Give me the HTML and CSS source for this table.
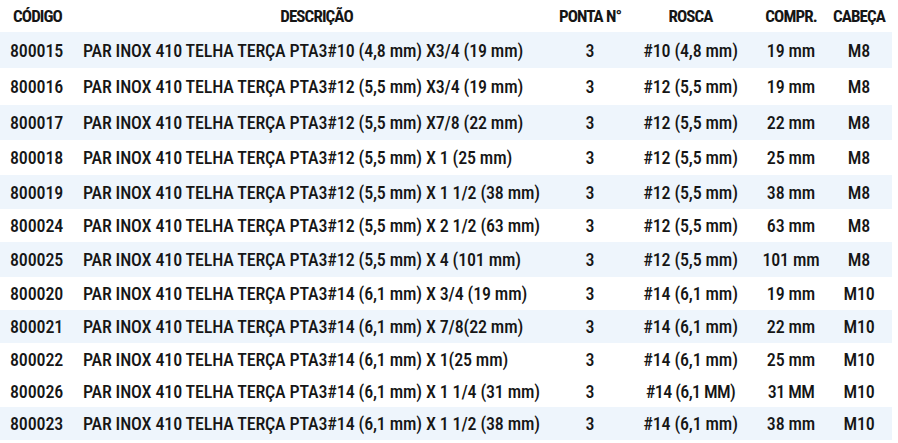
FILE: index.html
```html
<!DOCTYPE html>
<html lang="pt">
<head>
<meta charset="utf-8">
<link rel="stylesheet" href="styles.css">
</head>
<body>
<div class="table">
  <div class="row head">
    <div class="c code">CÓDIGO</div>
    <div class="c desc">DESCRIÇÃO</div>
    <div class="c mid">PONTA N°</div>
    <div class="c mid">ROSCA</div>
    <div class="c mid">COMPR.</div>
    <div class="c mid">CABEÇA</div>
  </div>
  <div class="row band">
    <div class="c code">800015</div>
    <div class="c desc">PAR INOX 410 TELHA TERÇA PTA3#10 (4,8 mm) X3/4 (19 mm)</div>
    <div class="c mid">3</div>
    <div class="c mid">#10 (4,8 mm)</div>
    <div class="c mid">19 mm</div>
    <div class="c mid">M8</div>
  </div>
  <div class="row">
    <div class="c code">800016</div>
    <div class="c desc">PAR INOX 410 TELHA TERÇA PTA3#12 (5,5 mm) X3/4 (19 mm)</div>
    <div class="c mid">3</div>
    <div class="c mid">#12 (5,5 mm)</div>
    <div class="c mid">19 mm</div>
    <div class="c mid">M8</div>
  </div>
  <div class="row band">
    <div class="c code">800017</div>
    <div class="c desc">PAR INOX 410 TELHA TERÇA PTA3#12 (5,5 mm) X7/8 (22 mm)</div>
    <div class="c mid">3</div>
    <div class="c mid">#12 (5,5 mm)</div>
    <div class="c mid">22 mm</div>
    <div class="c mid">M8</div>
  </div>
  <div class="row">
    <div class="c code">800018</div>
    <div class="c desc">PAR INOX 410 TELHA TERÇA PTA3#12 (5,5 mm) X 1 (25 mm)</div>
    <div class="c mid">3</div>
    <div class="c mid">#12 (5,5 mm)</div>
    <div class="c mid">25 mm</div>
    <div class="c mid">M8</div>
  </div>
  <div class="row band">
    <div class="c code">800019</div>
    <div class="c desc">PAR INOX 410 TELHA TERÇA PTA3#12 (5,5 mm) X 1 1/2 (38 mm)</div>
    <div class="c mid">3</div>
    <div class="c mid">#12 (5,5 mm)</div>
    <div class="c mid">38 mm</div>
    <div class="c mid">M8</div>
  </div>
  <div class="row">
    <div class="c code">800024</div>
    <div class="c desc">PAR INOX 410 TELHA TERÇA PTA3#12 (5,5 mm) X 2 1/2 (63 mm)</div>
    <div class="c mid">3</div>
    <div class="c mid">#12 (5,5 mm)</div>
    <div class="c mid">63 mm</div>
    <div class="c mid">M8</div>
  </div>
  <div class="row band">
    <div class="c code">800025</div>
    <div class="c desc">PAR INOX 410 TELHA TERÇA PTA3#12 (5,5 mm) X 4 (101 mm)</div>
    <div class="c mid">3</div>
    <div class="c mid">#12 (5,5 mm)</div>
    <div class="c mid">101 mm</div>
    <div class="c mid">M8</div>
  </div>
  <div class="row">
    <div class="c code">800020</div>
    <div class="c desc">PAR INOX 410 TELHA TERÇA PTA3#14 (6,1 mm) X 3/4 (19 mm)</div>
    <div class="c mid">3</div>
    <div class="c mid">#14 (6,1 mm)</div>
    <div class="c mid">19 mm</div>
    <div class="c mid">M10</div>
  </div>
  <div class="row band">
    <div class="c code">800021</div>
    <div class="c desc">PAR INOX 410 TELHA TERÇA PTA3#14 (6,1 mm) X 7/8(22 mm)</div>
    <div class="c mid">3</div>
    <div class="c mid">#14 (6,1 mm)</div>
    <div class="c mid">22 mm</div>
    <div class="c mid">M10</div>
  </div>
  <div class="row">
    <div class="c code">800022</div>
    <div class="c desc">PAR INOX 410 TELHA TERÇA PTA3#14 (6,1 mm) X 1(25 mm)</div>
    <div class="c mid">3</div>
    <div class="c mid">#14 (6,1 mm)</div>
    <div class="c mid">25 mm</div>
    <div class="c mid">M10</div>
  </div>
  <div class="row">
    <div class="c code">800026</div>
    <div class="c desc">PAR INOX 410 TELHA TERÇA PTA3#14 (6,1 mm) X 1 1/4 (31 mm)</div>
    <div class="c mid">3</div>
    <div class="c mid tight">#14 (6,1 MM)</div>
    <div class="c mid tight">31 MM</div>
    <div class="c mid">M10</div>
  </div>
  <div class="row band">
    <div class="c code">800023</div>
    <div class="c desc">PAR INOX 410 TELHA TERÇA PTA3#14 (6,1 mm) X 1 1/2 (38 mm)</div>
    <div class="c mid">3</div>
    <div class="c mid">#14 (6,1 mm)</div>
    <div class="c mid">38 mm</div>
    <div class="c mid">M10</div>
  </div>
</div>
</body>
</html>
```
FILE: styles.css
```css
html, body {
  margin: 0;
  padding: 0;
  background: #ffffff;
}
body {
  font-family: "Roboto Condensed", "Roboto", "Liberation Sans", sans-serif;
  font-stretch: condensed;
  color: #161616;
}
.table {
  width: 892px;
  display: flex;
  flex-direction: column;
}
.row {
  display: grid;
  grid-template-columns: 78px 477px 70px 131px 70px 66px;
  height: 34px;
  align-items: center;
  font-size: 18px;
  font-weight: 500;
  letter-spacing: -0.15px;
}
.row:nth-child(2) { height: 36px; }
.row:nth-child(3) { height: 37px; }
.row:nth-child(4) { height: 35px; }
.row:nth-child(5) { height: 35px; }
.row:nth-child(6) { height: 34px; }
.row:nth-child(7) { height: 33px; }
.row:nth-child(8) { height: 35px; }
.row:nth-child(9) { height: 33px; }
.row:nth-child(10) { height: 33px; }
.row:nth-child(11) { height: 32px; }
.row:nth-child(12) { height: 32px; }
.row:nth-child(13) { height: 33px; }
.row.band {
  background: #eef5fc;
}
.row.head {
  height: 32px;
  padding-bottom: 1px;
  box-sizing: border-box;
  font-size: 17px;
  font-weight: 700;
  letter-spacing: -0.9px;
}
.c {
  white-space: nowrap;
}
.code {
  padding-left: 10px;
}
.desc {
  padding-left: 5px;
}
.head .code {
  padding-left: 13px;
}
.head .desc {
  text-align: center;
  padding-left: 0;
}
.mid {
  text-align: center;
}
.tight {
  letter-spacing: -0.6px;
}
```
